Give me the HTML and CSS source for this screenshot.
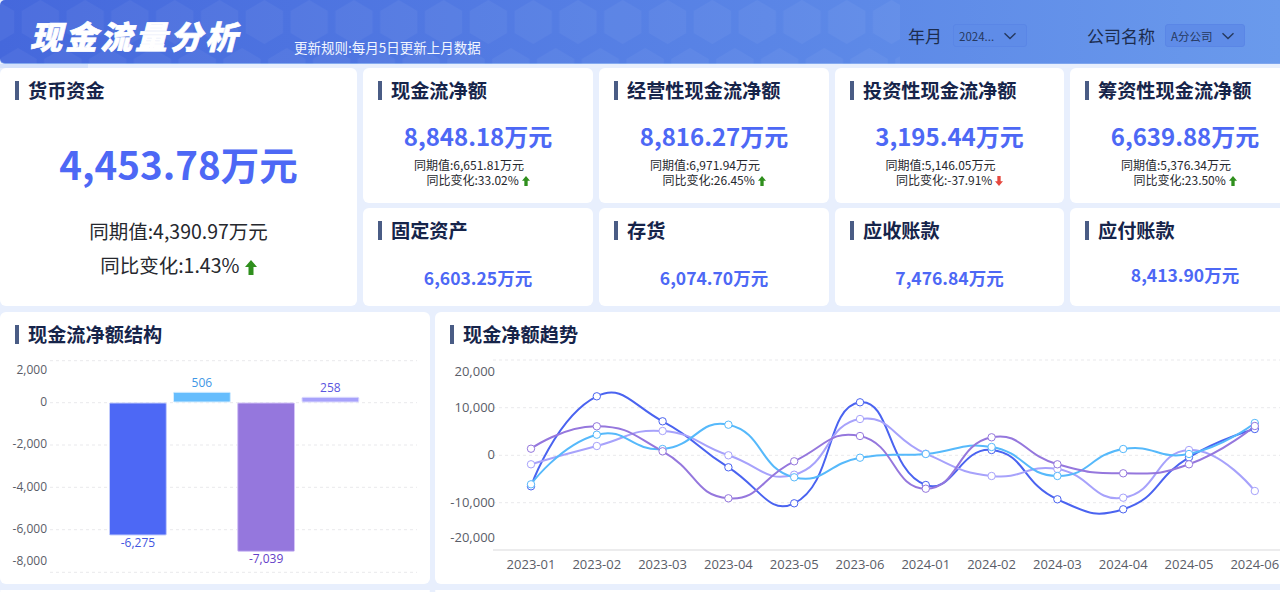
FILE: index.html
```html
<!DOCTYPE html>
<html lang="zh-CN">
<head>
    <meta charset="UTF-8">
    <meta name="viewport" content="width=device-width, initial-scale=1.0">
    <title>现金流量分析</title>
    <link rel="stylesheet" href="styles.css">
</head>
<body>
    <div class="page">
        <div class="header">
            <svg class="hex-bg" width="900" height="64">
                <defs>
                    <pattern id="hex" x="18" y="0" width="44.8" height="78" patternUnits="userSpaceOnUse">
                        <polygon points="22.4,0 41,11 41,33 22.4,44 3.8,33 3.8,11" fill="#fff" fill-opacity="0.045"/>
                        <polygon points="0,48 18.6,59 18.6,78 0,78 -18.6,78 -18.6,59" fill="#fff" fill-opacity="0.045"/>
                        <polygon points="44.8,48 63.4,59 63.4,78 44.8,78 26.2,78 26.2,59" fill="#fff" fill-opacity="0.045"/>
                    </pattern>
                </defs>
                <rect width="900" height="64" fill="url(#hex)"/>
            </svg>
            <div class="page-title">现金流量分析</div>
            <div class="update-rule">更新规则:每月5日更新上月数据</div>
            <div class="filter filter-month">
                <span class="filter-label">年月</span>
                <div class="select select-month">
                    <span>2024...</span>
                    <svg width="14" height="8" viewBox="0 0 14 8"><path d="M1.5 1.2 7 6.6l5.5-5.4" fill="none" stroke="#26395f" stroke-width="1.4"/></svg>
                </div>
            </div>
            <div class="filter filter-company">
                <span class="filter-label">公司名称</span>
                <div class="select select-company">
                    <span>A分公司</span>
                    <svg width="14" height="8" viewBox="0 0 14 8"><path d="M1.5 1.2 7 6.6l5.5-5.4" fill="none" stroke="#26395f" stroke-width="1.4"/></svg>
                </div>
            </div>
        </div>
        <div class="header-shadow"></div>

        <div class="kpi-grid">
            <div class="card card-big">
                <h3 class="card-title">货币资金</h3>
                <div class="big-value">4,453.78万元</div>
                <div class="big-sub">同期值:4,390.97万元</div>
                <div class="big-sub">同比变化:1.43% <svg class="arrow-big" width="12" height="15" viewBox="0 0 12 15"><path d="M6 0 12 7H8.5v8h-5V7H0z" fill="#2f8f1d"/></svg></div>
            </div>

            <div class="card">
                <h3 class="card-title">现金流净额</h3>
                <div class="mid-value">8,848.18万元</div>
                <div class="sub sub-prev">同期值:6,651.81万元</div>
                <div class="sub">同比变化:33.02% <svg class="arrow" width="8" height="10" viewBox="0 0 12 15"><path d="M6 0 12 7H8.5v8h-5V7H0z" fill="#2f8f1d"/></svg></div>
            </div>
            <div class="card">
                <h3 class="card-title">经营性现金流净额</h3>
                <div class="mid-value">8,816.27万元</div>
                <div class="sub sub-prev">同期值:6,971.94万元</div>
                <div class="sub">同比变化:26.45% <svg class="arrow" width="8" height="10" viewBox="0 0 12 15"><path d="M6 0 12 7H8.5v8h-5V7H0z" fill="#2f8f1d"/></svg></div>
            </div>
            <div class="card">
                <h3 class="card-title">投资性现金流净额</h3>
                <div class="mid-value">3,195.44万元</div>
                <div class="sub sub-prev">同期值:5,146.05万元</div>
                <div class="sub">同比变化:-37.91% <svg class="arrow" width="8" height="10" viewBox="0 0 12 15"><path d="M6 15 12 8H8.5V0h-5v8H0z" fill="#e5483f"/></svg></div>
            </div>
            <div class="card">
                <h3 class="card-title">筹资性现金流净额</h3>
                <div class="mid-value">6,639.88万元</div>
                <div class="sub sub-prev">同期值:5,376.34万元</div>
                <div class="sub">同比变化:23.50% <svg class="arrow" width="8" height="10" viewBox="0 0 12 15"><path d="M6 0 12 7H8.5v8h-5V7H0z" fill="#2f8f1d"/></svg></div>
            </div>

            <div class="card">
                <h3 class="card-title">固定资产</h3>
                <div class="small-value">6,603.25万元</div>
            </div>
            <div class="card">
                <h3 class="card-title">存货</h3>
                <div class="small-value">6,074.70万元</div>
            </div>
            <div class="card">
                <h3 class="card-title">应收账款</h3>
                <div class="small-value">7,476.84万元</div>
            </div>
            <div class="card">
                <h3 class="card-title">应付账款</h3>
                <div class="small-value small-value-up">8,413.90万元</div>
            </div>
        </div>

        <div class="chart-grid">
            <div class="card chart-card">
                <h3 class="card-title">现金流净额结构</h3>
                <svg id="barChart" class="chart" width="430" height="272"></svg>
            </div>
            <div class="card chart-card">
                <h3 class="card-title">现金净额趋势</h3>
                <svg id="lineChart" class="chart" width="865" height="272"></svg>
            </div>
            <div class="card next-row"></div>
            <div class="card next-row"></div>
        </div>
    </div>
    <script src="chart.js"></script>
</body>
</html>
```

FILE: styles.css
```css
* { box-sizing: border-box; }
body {
    margin: 0;
    height: 592px;
    overflow: hidden;
    background-color: #e8effd;
    font-family: "Noto Sans CJK SC", "Noto Sans", sans-serif;
}
.page { width: 1280px; overflow: hidden; }

.header {
    position: relative;
    display: flex;
    width: 1280px;
    height: 64px;
    border-radius: 5px 0 0 5px;
    border-bottom: 1px solid #7fa6ee;
    background: linear-gradient(90deg, #4568dc 0%, #5a85e6 60%, #6a9aec 100%);
}
.hex-bg { position: absolute; left: 0; top: 0; }
.page-title {
    position: relative;
    margin: 13px 0 0 30px;
    width: 264px;
    font-size: 32px;
    line-height: 44px;
    font-weight: 900;
    font-style: italic;
    letter-spacing: 3px;
    color: #fff;
    -webkit-text-stroke: 0.7px #fff;
}
.update-rule {
    position: relative;
    margin-top: 37px;
    width: 614px;
    font-size: 13.5px;
    line-height: 20px;
    color: #f2f6ff;
}
.filter {
    position: relative;
    display: flex;
    align-items: center;
    height: 23px;
    margin-top: 24px;
}
.filter-month { width: 179px; }
.filter-label {
    font-size: 17px;
    color: #1c2c4e;
    margin-right: 11px;
}
.select {
    display: flex;
    align-items: center;
    justify-content: space-between;
    height: 23px;
    padding: 0 9px 0 5px;
    border: 1px solid #5a86e6;
    border-radius: 3px;
    background-color: #5f8ce8;
    font-size: 11.5px;
    color: #26395f;
}
.select-month { width: 74px; }
.select-company { width: 80px; }
.filter-company .filter-label { margin-right: 10px; }

.header-shadow {
    width: 88px;
    height: 4px;
    background-color: #d5e2fb;
}

.kpi-grid {
    display: grid;
    grid-template-columns: 357px 230px 230px 229px 230px;
    grid-template-rows: 135px 98px;
    column-gap: 6px;
    row-gap: 5px;
}
.card {
    background-color: #fff;
    border-radius: 6px;
    padding: 13px 0 0 15px;
    text-align: center;
}
.card-big { grid-row: span 2; }
.card-title {
    margin: 0;
    padding-left: 9px;
    border-left: 4px solid #4a5c85;
    height: 19px;
    font-size: 19.2px;
    line-height: 19px;
    font-weight: 700;
    color: #16244a;
    text-align: left;
    white-space: nowrap;
}
.big-value {
    margin: 33px 0 0 -15px;
    font-size: 38.5px;
    line-height: 60px;
    font-weight: 700;
    color: #4d68f5;
}
.big-sub {
    margin: 25px 0 0 -15px;
    font-size: 19.5px;
    line-height: 26px;
    color: #26282e;
}
.big-sub + .big-sub { margin-top: 8px; }
.arrow-big { vertical-align: -2px; margin-left: 1px; }
.mid-value {
    margin: 18px 0 0 -15px;
    font-size: 24px;
    line-height: 36px;
    font-weight: 700;
    color: #4d68f5;
}
.sub {
    margin-left: -15px;
    font-size: 12px;
    line-height: 15px;
    color: #26282e;
}
.sub-prev {
    margin-top: 3px;
    padding-right: 18px;
}
.arrow { vertical-align: -1px; }
.small-value {
    margin: 25px 0 0 -15px;
    font-size: 17.5px;
    line-height: 26px;
    font-weight: 700;
    color: #4d68f5;
}
.small-value-up { margin-top: 22px; }

.chart-grid {
    display: grid;
    grid-template-columns: 430px 865px;
    grid-template-rows: 272px 2px;
    column-gap: 5px;
    row-gap: 6px;
    margin-top: 6px;
}
.chart-card {
    position: relative;
}
.next-row { padding: 0; }
.chart { position: absolute; left: 0; top: 0; }
.chart text {
    font-family: "Open Sans", "Noto Sans", sans-serif;
}
```

FILE: chart.js
```js
const NS = 'http://www.w3.org/2000/svg';

function add(svg, tag, attrs, text) {
    const el = document.createElementNS(NS, tag);
    for (const k in attrs) el.setAttribute(k, attrs[k]);
    if (text !== undefined) el.textContent = text;
    svg.appendChild(el);
    return el;
}

// bar chart, coords are relative to the card (card top = 312)
const bar = document.getElementById('barChart');
const barLines = [48.7, 90.7, 133, 175.3, 217.7, 260.3];
barLines.forEach(y => add(bar, 'line', { x1: 50, x2: 417, y1: y, y2: y, stroke: '#e9e9ec', 'stroke-dasharray': '3 3' }));

[['2,000', 57.5], ['0', 90], ['-2,000', 132], ['-4,000', 175], ['-6,000', 217], ['-8,000', 249]].forEach(l => {
    add(bar, 'text', { x: 47, y: l[1] + 4, 'text-anchor': 'end', 'font-size': 12, fill: '#5a5d68' }, l[0]);
});

const bars = [
    { x: 109.5, y: 91, h: 132, fill: '#4d68f5', edge: '#c3cdfc', label: '-6,275', ly: 231, lc: '#4255e0' },
    { x: 173.5, y: 80.3, h: 9.7, fill: '#65bdfd', edge: '#d4edff', label: '506', ly: 70.5, lc: '#3f97e6' },
    { x: 237.7, y: 91, h: 148.3, fill: '#9577dd', edge: '#d3c4f7', label: '-7,039', ly: 247, lc: '#6440c8' },
    { x: 302, y: 85.3, h: 4.7, fill: '#a7a2fb', edge: '#dddbfe', label: '258', ly: 75.5, lc: '#5a55e0' }
];
bars.forEach(b => {
    add(bar, 'rect', { x: b.x, y: b.y, width: 56.8, height: b.h, rx: 1, fill: b.fill, stroke: b.edge, 'stroke-width': 1 });
    add(bar, 'text', { x: b.x + 28.4, y: b.ly + 4, 'text-anchor': 'middle', 'font-size': 12, fill: b.lc }, b.label);
});

// line chart, coords are relative to the card (card left = 435, top = 312)
const line = document.getElementById('lineChart');
[48, 95.7, 143.3, 190.7].forEach(y => add(line, 'line', { x1: 58, x2: 865, y1: y, y2: y, stroke: '#e9e9ec', 'stroke-dasharray': '3 3' }));
add(line, 'line', { x1: 58, x2: 865, y1: 238, y2: 238, stroke: '#d9d9dc', 'stroke-width': 1.2 });

[['20,000', 59], ['10,000', 95], ['0', 142], ['-10,000', 190], ['-20,000', 225]].forEach(l => {
    add(line, 'text', { x: 60, y: l[1] + 5, 'text-anchor': 'end', 'font-size': 13, fill: '#5a5d68' }, l[0]);
});

const months = ['2023-01', '2023-02', '2023-03', '2023-04', '2023-05', '2023-06', '2024-01', '2024-02', '2024-03', '2024-04', '2024-05', '2024-06'];
const xs = months.map((m, i) => 96 + i * 65.8);
months.forEach((m, i) => add(line, 'text', { x: xs[i], y: 257, 'text-anchor': 'middle', 'font-size': 13, fill: '#5a5d68' }, m));

const series = [
    { color: '#4a63f0', ys: [486.3, 396.3, 421.3, 467.3, 503.3, 402.3, 485, 450, 499.3, 509.3, 457.3, 429] },
    { color: '#a7a2fb', ys: [464.3, 446, 431, 455.3, 474.7, 419, 453.7, 476, 469, 497.7, 450, 491] },
    { color: '#56b9fb', ys: [484.3, 434.7, 449, 424.7, 477.3, 457.7, 454, 447, 476, 449, 454, 423] },
    { color: '#9577dd', ys: [448.7, 426.3, 451.3, 498.3, 461.3, 436, 488.7, 437.3, 464.3, 473.3, 464.3, 426] }
];

// same idea as echarts smooth: 0.5
function smoothPath(pts) {
    const smooth = 0.5;
    let d = `M${pts[0][0]} ${pts[0][1]}`;
    const cp = pts.map((p, i) => {
        if (i === 0 || i === pts.length - 1) return [p, p];
        const prev = pts[i - 1], next = pts[i + 1];
        const vx = next[0] - prev[0], vy = next[1] - prev[1];
        const l1 = Math.hypot(p[0] - prev[0], p[1] - prev[1]);
        const l2 = Math.hypot(next[0] - p[0], next[1] - p[1]);
        const r1 = l1 / (l1 + l2), r2 = l2 / (l1 + l2);
        return [[p[0] - vx * smooth * r1, p[1] - vy * smooth * r1], [p[0] + vx * smooth * r2, p[1] + vy * smooth * r2]];
    });
    for (let i = 1; i < pts.length; i++) {
        d += `C${cp[i - 1][1][0]} ${cp[i - 1][1][1]} ${cp[i][0][0]} ${cp[i][0][1]} ${pts[i][0]} ${pts[i][1]}`;
    }
    return d;
}

series.forEach(s => {
    const pts = s.ys.map((y, i) => [xs[i], y - 312]);
    add(line, 'path', { d: smoothPath(pts), fill: 'none', stroke: s.color, 'stroke-width': 2 });
});
series.forEach(s => {
    s.ys.forEach((y, i) => add(line, 'circle', { cx: xs[i], cy: y - 312, r: 3.7, fill: '#fff', stroke: s.color, 'stroke-width': 1 }));
});
```
